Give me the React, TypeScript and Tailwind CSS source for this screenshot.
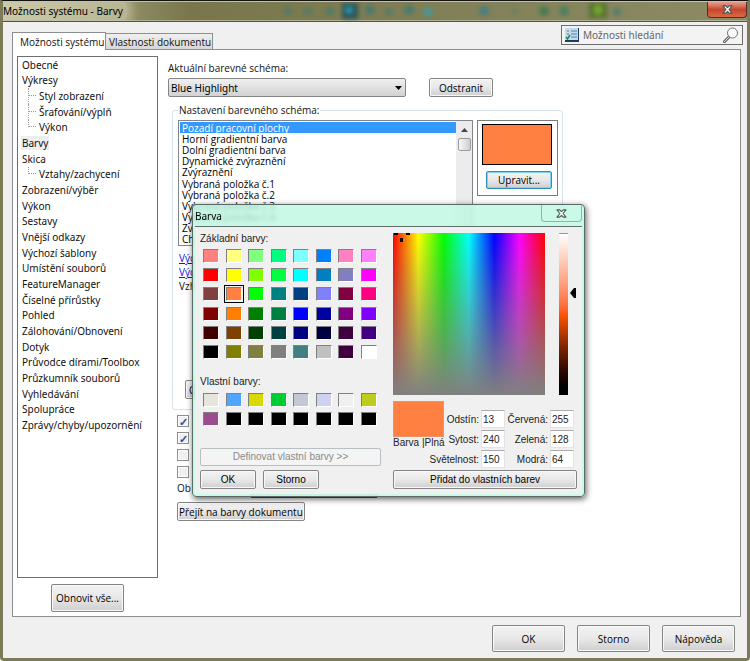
import React from "react";

const tree: { label: string; depth: number; active?: boolean; last?: boolean }[] = [
  { label: "Obecné", depth: 0 },
  { label: "Výkresy", depth: 0 },
  { label: "Styl zobrazení", depth: 1 },
  { label: "Šrafování/výplň", depth: 1 },
  { label: "Výkon", depth: 1, last: true },
  { label: "Barvy", depth: 0, active: true },
  { label: "Skica", depth: 0 },
  { label: "Vztahy/zachycení", depth: 1, last: true },
  { label: "Zobrazení/výběr", depth: 0 },
  { label: "Výkon", depth: 0 },
  { label: "Sestavy", depth: 0 },
  { label: "Vnější odkazy", depth: 0 },
  { label: "Výchozí šablony", depth: 0 },
  { label: "Umístění souborů", depth: 0 },
  { label: "FeatureManager", depth: 0 },
  { label: "Číselné přírůstky", depth: 0 },
  { label: "Pohled", depth: 0 },
  { label: "Zálohování/Obnovení", depth: 0 },
  { label: "Dotyk", depth: 0 },
  { label: "Průvodce dírami/Toolbox", depth: 0 },
  { label: "Průzkumník souborů", depth: 0 },
  { label: "Vyhledávání", depth: 0 },
  { label: "Spolupráce", depth: 0 },
  { label: "Zprávy/chyby/upozornění", depth: 0 },
];

const schemeItems = [
  "Pozadí pracovní plochy",
  "Horní gradientní barva",
  "Dolní gradientní barva",
  "Dynamické zvýraznění",
  "Zvýraznění",
  "Vybraná položka č.1",
  "Vybraná položka č.2",
  "Vybraná položka č.3",
  "Vybraná položka č.4",
  "Zv",
  "Ch",
];

const basicColors = [
  "#ff8080", "#ffff80", "#80ff80", "#00ff80", "#80ffff", "#0080ff", "#ff80c0", "#ff80ff",
  "#ff0000", "#ffff00", "#80ff00", "#00ff40", "#00ffff", "#0080c0", "#8080c0", "#ff00ff",
  "#804040", "#ff8040", "#00ff00", "#008080", "#004080", "#8080ff", "#800040", "#ff0080",
  "#800000", "#ff8000", "#008000", "#008040", "#0000ff", "#0000a0", "#800080", "#8000ff",
  "#400000", "#804000", "#004000", "#004040", "#000080", "#000040", "#400040", "#400080",
  "#000000", "#808000", "#808040", "#808080", "#408080", "#c0c0c0", "#400040", "#ffffff",
];

const customColors = [
  "#e6e5dc", "#51a5ff", "#d9d900", "#00cc33", "#c3c8d4", "#ccd2f0", "#f0f0f0", "#bfcc1f",
  "#9e4a90", "#000000", "#000000", "#000000", "#000000", "#000000", "#000000", "#000000",
];

const buttonTones = {
  normal:
    "border-[#858585] from-[#f3f3f3] via-[#e8e8e8] to-[#cfcfcf] text-black shadow-[inset_0_0_0_1px_#f8f8f8]",
  focused:
    "border-[#2f8fbf] from-[#f3f3f3] via-[#e8e8e8] to-[#cfcfcf] text-black shadow-[inset_0_0_0_1px_#7fd3f2]",
  disabled: "border-[#b9c0c4] from-[#f4f4f4] via-[#f4f4f4] to-[#f4f4f4] text-[#8a8a8a]",
};

function PushButton({
  className = "",
  tone = "normal",
  ...rest
}: React.ButtonHTMLAttributes<HTMLButtonElement> & { tone?: keyof typeof buttonTones }) {
  return (
    <button
      type="button"
      disabled={tone === "disabled"}
      className={`shrink-0 whitespace-nowrap rounded-[2px] border bg-linear-to-b text-center ${buttonTones[tone]} ${className}`}
      {...rest}
    />
  );
}

function Swatches({ colors, selected, className }: { colors: string[]; selected?: number; className: string }) {
  return (
    <div className={`grid grid-cols-[repeat(8,16px)] content-between justify-between ${className}`}>
      {colors.map((c, i) => (
        <button
          key={i}
          type="button"
          aria-label={c}
          className={`h-[14px] w-4 border border-t-[#808080] border-l-[#808080] border-r-white border-b-white ${
            i === selected ? "outline outline-1 outline-offset-1 outline-black" : ""
          }`}
          style={{ backgroundColor: c }}
        />
      ))}
    </div>
  );
}

function NumberField({ label, value, wide }: { label: string; value: string; wide?: boolean }) {
  const id = `value-${label}`;
  return (
    <>
      <label htmlFor={id} className={`whitespace-nowrap pr-[2px] text-right ${wide ? "col-span-2" : ""}`}>
        {label}:
      </label>
      <input
        id={id}
        defaultValue={value}
        className="h-[18px] w-6 border border-[#e3e3e3] border-t-[#ababab] bg-white pl-px text-left outline-none"
      />
    </>
  );
}

function CloseGlyph({ className }: { className: string }) {
  return (
    <svg viewBox="0 0 12 10" className={className} aria-hidden="true">
      <path d="M1 1h3l2 2 2-2h3L7.700 5 11 9H8L6 7 4 9H1l3.300-4z" fill="#fff" stroke="#4b5654" strokeWidth="1.200" strokeLinejoin="round" />
    </svg>
  );
}

function ColorDialog() {
  return (
    <section
      role="dialog"
      aria-label="Barva"
      className="absolute left-[189px] top-[203px] flex w-[393px] flex-col rounded-[4px] border border-[#5b6a66] bg-[#bdf8e2]/80 px-[2px] pb-[2px] font-['Liberation_Sans',Arial,sans-serif] text-[10px] leading-3 text-[#222] shadow-[1px_2px_6px_rgba(0,0,0,0.65)] backdrop-blur-[2px]"
    >
      <header className="flex h-[21px] items-start justify-between">
        <h2 className="pt-1 font-['Noto_Sans','Open_Sans',sans-serif] text-[10px] leading-[14px] text-black">Barva</h2>
        <button
          type="button"
          aria-label="Zavřít barvy"
          className="flex h-[17px] w-[41px] items-center justify-center rounded-b-[4px] border border-t-0 border-[#8fb5a8]"
        >
          <CloseGlyph className="h-[9px] w-[11px]" />
        </button>
      </header>

      <div className="flex justify-between border-t border-[#5f6f6a] bg-[#f0f0f0] pb-[5px] pl-[5px] pr-[5px] pt-[6px]">
        <div className="flex w-[181px] flex-col">
          <p>Základní barvy:</p>
          <Swatches colors={basicColors} selected={17} className="ml-[3px] mt-1 h-[110px] w-[174px]" />
          <p className="mt-[17px]">Vlastní barvy:</p>
          <Swatches colors={customColors} className="ml-[3px] mt-[5px] h-[33px] w-[174px]" />
          <PushButton tone="disabled" className="mt-[22px] h-[18px]">
            Definovat vlastní barvy &gt;&gt;
          </PushButton>
          <div className="mt-1 flex gap-[7px]">
            <PushButton className="h-[19px] w-14">OK</PushButton>
            <PushButton className="h-[19px] w-14">Storno</PushButton>
          </div>
        </div>

        <div className="flex w-[184px] flex-col">
          <div className="flex">
            <div className="relative h-[162px] w-[152px] bg-[linear-gradient(to_bottom,rgba(128,128,128,0),#808080),linear-gradient(to_right,#f00,#ff0,#0f0,#0ff,#00f,#f0f,#f00)]">
              <svg viewBox="0 0 20 10" className="absolute left-0 top-0 h-[10px] w-5" aria-hidden="true">
                <path d="M1 0h4v2H1zM13 0h4v2h-4zM7 5h3v4H7z" fill="#000" />
              </svg>
            </div>
            <div className="ml-[14px] h-[162px] w-[9px] border-t border-[#999] bg-linear-to-b from-white via-[#ff5500] to-black" />
            <svg viewBox="0 0 6 10" className="ml-[2px] mt-[55px] h-[10px] w-[6px]" aria-hidden="true">
              <path d="M6 0v10H4L0 5l4-5z" fill="#000" />
            </svg>
          </div>

          <div className="mt-[6px] grid grid-cols-[51px_1fr_auto_45px_auto] grid-rows-[27px_20px_20px] items-end pr-[3px] leading-[17px]">
            <div className="row-span-2 self-start">
              <div className="h-9 border border-[#e8926a] bg-[#ff8040]" />
              <p className="whitespace-nowrap leading-3">Barva |Plná</p>
            </div>
            <NumberField label="Odstín" value="13" />
            <NumberField label="Červená" value="255" />
            <NumberField label="Sytost" value="240" />
            <NumberField label="Zelená" value="128" />
            <NumberField label="Světelnost" value="150" wide />
            <NumberField label="Modrá" value="64" />
          </div>
          <PushButton className="mt-[2px] h-[19px]">Přidat do vlastních barev</PushButton>
        </div>
      </div>
    </section>
  );
}

function Checkbox({ checked, label }: { checked: boolean; label: string }) {
  return (
    <input
      type="checkbox"
      defaultChecked={checked}
      aria-label={label}
      className="flex size-3 appearance-none items-center justify-center border border-[#8e8f8f] bg-[#f0f0f0] shadow-[inset_0_0_0_1px_#fff] before:text-[11px] before:font-bold before:leading-none before:text-[#2f4f9f] checked:before:content-['✓']"
    />
  );
}

export default function App() {
  return (
    <div className="relative flex min-h-screen flex-col rounded-b-[4px] border-x-[3px] border-b-[3px] border-t border-[#7b7b58] border-t-[#111] bg-[#f0f0f0] font-['Open_Sans','Noto_Sans',sans-serif] text-[10px] leading-[14px] text-[#111]">
      <header className="relative flex h-[21px] items-start justify-between overflow-hidden border-b border-t border-b-[#55553c] border-t-[#c4c3a8] bg-linear-to-r from-[#c4c2a0] via-[#78764a] via-25% to-[#8d8b66] shadow-[inset_0_-1px_0_#b3b193]">
        <svg className="absolute left-[275px] top-0 h-[18px] w-[360px] blur-[2px]" viewBox="0 0 360 18" aria-hidden="true">
          <g fill="#3d7a74">
            <circle cx="10" cy="9" r="4" opacity=".6" />
            <circle cx="30" cy="9" r="4" opacity=".6" />
            <circle cx="52" cy="9" r="4" opacity=".8" />
            <rect x="64" y="1" width="16" height="16" fill="#2a565a" />
            <circle cx="71" cy="8" r="4" fill="#2f8fa8" />
            <circle cx="92" cy="8" r="5" opacity=".8" />
            <circle cx="111" cy="10" r="4" opacity=".6" />
            <circle cx="131" cy="8" r="5" opacity=".8" />
            <circle cx="150" cy="10" r="5" fill="#4a958f" />
            <circle cx="206" cy="9" r="5" fill="#3f7c8c" opacity=".8" />
            <circle cx="236" cy="9" r="3" opacity=".4" />
            <circle cx="266" cy="9" r="5" fill="#357a4b" opacity=".8" />
            <circle cx="286" cy="9" r="5" fill="#3f805f" opacity=".8" />
            <rect x="311" y="1" width="18" height="15" fill="#56712f" />
            <circle cx="320" cy="8" r="5" fill="#79b62c" opacity=".8" />
            <circle cx="339" cy="10" r="4" opacity=".7" />
          </g>
        </svg>
        <h1 className="relative rounded bg-[#d0cfb0]/60 pr-1 font-['Noto_Sans','Open_Sans',sans-serif] text-[10px] leading-[18px] text-black shadow-[0_0_10px_5px_rgba(208,207,176,0.6)]">
          Možnosti systému - Barvy
        </h1>
        <button
          type="button"
          aria-label="Zavřít"
          className="relative flex h-4 w-10 items-center justify-center rounded-b-[4px] border border-t-0 border-[#5b2a20] bg-linear-to-b from-[#e0a08f] via-[#c8452c] via-50% to-[#d8694a]"
        >
          <CloseGlyph className="h-[9px] w-[11px]" />
        </button>
      </header>

      <div className="flex items-end justify-between pl-[9px] pr-1 pt-[3px]">
        <nav role="tablist" className="flex items-end whitespace-nowrap">
          <button role="tab" aria-selected="true" className="relative -mb-px h-[18px] w-[94px] border border-b-0 border-[#8c8e94] bg-white pl-[7px] text-left">
            Možnosti systému
          </button>
          <button role="tab" aria-selected="false" className="h-4 w-[107px] border border-b-0 border-l-0 border-[#8c8e94] bg-linear-to-b from-[#f0f0f0] to-[#d6d6d6] pl-[3px] text-left">
            Vlastnosti dokumentu
          </button>
        </nav>
        <label className="mb-1 flex h-5 w-[182px] items-center gap-1 border border-[#6d6d6d] bg-[#f3f3f3] px-[3px]">
          <svg viewBox="0 0 14 14" className="size-[14px] shrink-0" aria-hidden="true">
            <path d="M0 0h14v14H0z" fill="#1d3c63" />
            <path d="M0 0h13v12H0z" fill="#c3dbee" />
            <path d="M6 3h6M6 6h6M6 9h6" stroke="#5b7fa6" />
            <path d="M2 3h2M2 6h2" stroke="#5b7fa6" />
            <path d="m1 9 1.500 2L5 7" stroke="#1f8f3c" strokeWidth="1.500" fill="none" />
          </svg>
          <input
            aria-label="Možnosti hledání"
            placeholder="Možnosti hledání"
            className="min-w-0 flex-1 bg-transparent font-['Noto_Sans','Open_Sans',sans-serif] outline-none placeholder:text-[#666]"
          />
          <svg viewBox="0 0 16 16" className="size-4 shrink-0" aria-hidden="true">
            <path d="m6 10-5 5" stroke="#666" strokeWidth="3" strokeLinecap="round" />
            <path d="m6 10-5 5" stroke="#ddd" strokeWidth="1" strokeLinecap="round" />
            <circle cx="9.500" cy="6" r="5" fill="#fbfbfb" stroke="#777" />
          </svg>
        </label>
      </div>

      <main className="ml-[9px] mr-[6px] flex flex-1 gap-[10px] border border-[#8c8e94] bg-white pb-1 pl-1 pt-[6px]">
        <aside className="flex w-[141px] shrink-0 flex-col items-center">
          <div className="w-full flex-1 border border-[#6e6e6e]">
            <ul className="grid h-[376px] auto-rows-fr pl-[3px] font-['Noto_Sans','Open_Sans',sans-serif]">
              {tree.map((node, i) => (
                <li key={i} className="flex items-center">
                  {node.depth === 1 && (
                    <span
                      className={`ml-[7px] flex w-2 border-l border-dotted border-[#999] ${
                        node.last ? "h-1/2 self-start" : "h-full"
                      }`}
                      aria-hidden="true"
                    >
                      <span className={`w-full border-b border-dotted border-[#999] ${node.last ? "self-end" : "h-1/2"}`} />
                    </span>
                  )}
                  <button
                    type="button"
                    className={`whitespace-nowrap text-left ${node.depth === 1 ? "pl-[3px]" : "px-px"} ${node.active ? "bg-[#eee]" : ""}`}
                  >
                    {node.label}
                  </button>
                </li>
              ))}
            </ul>
          </div>
          <PushButton className="mt-[6px] h-7 w-[73px]">Obnovit vše...</PushButton>
        </aside>

        <div className="flex flex-1 flex-col items-start pt-[5px]">
          <label htmlFor="scheme">Aktuální barevné schéma:</label>
          <div className="mt-[3px] flex gap-[23px]">
            <div className="relative">
              <select
                id="scheme"
                className="h-[19px] w-[238px] appearance-none rounded-[2px] border border-[#858585] bg-linear-to-b from-[#f0f0f0] to-[#d2d2d2] pl-[2px] font-['Noto_Sans','Open_Sans',sans-serif] text-black"
              >
                <option>Blue Highlight</option>
              </select>
              <svg viewBox="0 0 7 4" className="pointer-events-none absolute right-[4px] top-2 h-1 w-[7px]" aria-hidden="true">
                <path d="M0 0h7L3.500 4z" fill="#000" />
              </svg>
            </div>
            <PushButton className="h-[19px] w-16">Odstranit</PushButton>
          </div>

          <fieldset className="ml-1 mt-[6px] h-[307px] w-[391px] rounded-[3px] border border-[#d8e2e8] pl-[5px] pr-1">
            <legend className="px-px">Nastavení barevného schéma:</legend>
            <div className="mt-[3px] flex items-start justify-between">
              <div className="flex h-[126px] w-[295px] border border-[#7f858b]">
                <ul role="listbox" aria-label="Nastavení barevného schéma" className="grid flex-1 auto-rows-fr overflow-hidden pl-px pt-px">
                  {schemeItems.map((item, i) => (
                    <li
                      key={i}
                      role="option"
                      aria-selected={i === 0}
                      className={`flex items-center pl-[2px] pt-px leading-[11px] ${i === 0 ? "bg-[#3399ff] text-white" : "text-black"}`}
                    >
                      {item}
                    </li>
                  ))}
                </ul>
                <div className="flex w-4 flex-col items-center bg-[#ececec] pt-[7px]" aria-hidden="true">
                  <svg viewBox="0 0 7 4" className="h-1 w-[7px]">
                    <path d="M0 4h7L3.500 0z" fill="#444" />
                  </svg>
                  <span className="mt-[6px] h-[13px] w-[13px] rounded-[2px] border border-[#9a9a9a] bg-linear-to-r from-[#f7f7f7] to-[#cfcfcf]" />
                </div>
              </div>
              <div className="flex w-[81px] flex-col items-end border border-[#7c7c7c] px-[5px] pb-[6px] pt-[3px]">
                <div className="h-[41px] w-[70px] border border-black bg-[#ff8040]" />
                <PushButton tone="focused" className="mt-[6px] h-[18px] w-[66px]">Upravit...</PushButton>
              </div>
            </div>
            <div className="mt-[5px] flex flex-col items-start pl-px">
              <a href="#defaults" className="text-[#1414dc] underline">Výc</a>
              <a href="#reset" className="text-[#1414dc] underline">Výc</a>
              <span>Vzh</span>
            </div>
            <PushButton className="ml-[7px] mt-[87px] h-[19px] w-4">O</PushButton>
          </fieldset>

          <div className="ml-[9px] mt-[5px] flex flex-col items-start gap-[5px]">
            <Checkbox checked label="První volba barev" />
            <Checkbox checked label="Druhá volba barev" />
            <Checkbox checked={false} label="Třetí volba barev" />
            <Checkbox checked={false} label="Čtvrtá volba barev" />
          </div>
          <div className="ml-[9px] mt-[3px] flex items-start gap-[60px]">
            <label htmlFor="shade">Ob</label>
            <select id="shade" className="h-[17px] w-[126px] appearance-none border border-[#555] bg-[#ddd]">
              <option></option>
            </select>
          </div>
          <PushButton className="ml-[9px] mt-1 h-[19px] px-px">Přejít na barvy dokumentu</PushButton>
        </div>
      </main>

      <footer className="flex justify-end gap-3 pb-[6px] pr-3 pt-2">
        <PushButton className="h-[27px] w-[73px]">OK</PushButton>
        <PushButton className="h-[27px] w-[73px]">Storno</PushButton>
        <PushButton className="h-[27px] w-[73px]">Nápověda</PushButton>
      </footer>

      <ColorDialog />
    </div>
  );
}
